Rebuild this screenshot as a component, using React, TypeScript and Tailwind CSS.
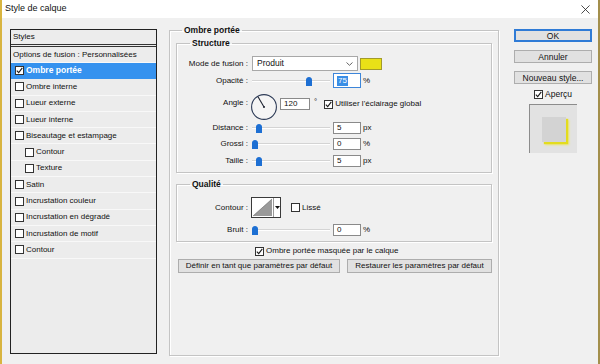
import type { ReactNode } from 'react'

interface Effect {
  label: string
  checked?: boolean
  selected?: boolean
  sub?: boolean
}

const EFFECTS: Effect[] = [
  { label: 'Ombre portée', checked: true, selected: true },
  { label: 'Ombre interne' },
  { label: 'Lueur externe' },
  { label: 'Lueur interne' },
  { label: 'Biseautage et estampage' },
  { label: 'Contour', sub: true },
  { label: 'Texture', sub: true },
  { label: 'Satin' },
  { label: 'Incrustation couleur' },
  { label: 'Incrustation en dégradé' },
  { label: 'Incrustation de motif' },
  { label: 'Contour' },
]

// thumb position is a fraction of the track, not the raw value
const SIZE_SLIDERS = [
  { label: 'Distance', value: '5', unit: 'px', pos: 0.05, gap: 'mt-[1px]' },
  { label: 'Grossi', value: '0', unit: '%', pos: 0, gap: 'mt-[3px]' },
  { label: 'Taille', value: '5', unit: 'px', pos: 0.05, gap: 'mt-[4px]' },
]

function CheckBox({ checked }: { checked?: boolean }) {
  return (
    <span className="flex h-[9px] w-[9px] shrink-0 items-center justify-center border border-[#333] bg-white">
      {checked && (
        <svg viewBox="0 0 7 7" className="h-[7px] w-[7px]">
          <path d="M0.8 3.6 L2.7 5.6 L6.3 0.9" fill="none" stroke="#1a1a1a" strokeWidth="1.1" />
        </svg>
      )}
    </span>
  )
}

function Label({ children }: { children: ReactNode }) {
  return <span className="w-[71px] shrink-0 text-right leading-[10px]">{children} :</span>
}

function NumberBox({ value, className = 'w-[27px]' }: { value: string; className?: string }) {
  return (
    <span className={`flex h-[12px] shrink-0 items-center border border-[#8a8a8a] bg-white pl-[3px] leading-[10px] ${className}`}>
      {value}
    </span>
  )
}

function Slider({ pos }: { pos: number }) {
  return (
    <span className="relative flex h-[10px] w-[78px] shrink-0 items-center">
      <span className="h-[2px] w-full border-b border-white bg-[#d4d4d4]" />
      <svg
        viewBox="0 0 6 9"
        className="absolute top-[1px] h-[9px] w-[6px]"
        style={{ left: `${pos * 72}px` }}
      >
        <path d="M0 3 Q0 0.3 3 0 Q6 0.3 6 3 V9 H0 Z" fill="#1d6fd3" />
      </svg>
    </span>
  )
}

function SliderRow({ label, value, unit, pos, className = '' }: { label: string; value: string; unit: string; pos: number; className?: string }) {
  return (
    <div className={`flex h-[13px] items-center ${className}`}>
      <Label>{label}</Label>
      <span className="ml-[4px] flex items-center">
        <Slider pos={pos} />
        <NumberBox value={value} className="ml-[3px] w-[28px]" />
        <span className="ml-[2px] leading-[10px]">{unit}</span>
      </span>
    </div>
  )
}

function Group({
  title,
  className,
  legendClass = 'ml-[13px]',
  children,
}: {
  title: string
  className: string
  legendClass?: string
  children: ReactNode
}) {
  return (
    <fieldset className={`border border-[#c4c4c4] shadow-[inset_1px_1px_0_#fff,1px_1px_0_#fff] ${className}`}>
      <legend className={`px-[2px] text-[8.5px] leading-[10px] font-bold ${legendClass}`}>{title}</legend>
      {children}
    </fieldset>
  )
}

function Button({ children, primary, className = '' }: { children: ReactNode; primary?: boolean; className?: string }) {
  return (
    <div
      className={`flex h-[13px] items-center justify-center bg-[#e1e1e1] leading-[10px] ${
        primary ? 'border border-[#2f7bd6] shadow-[inset_0_0_0_1px_#2f7bd6]' : 'border border-[#adadad]'
      } ${className}`}
    >
      {children}
    </div>
  )
}

function LeftPanel() {
  return (
    <div className="ml-[8px] mt-[11px] flex h-[325px] w-[147px] flex-col border border-[#222] bg-[#ececec]">
      <div className="flex h-[17px] items-center border-b-[3px] border-double border-[#333] pl-[2px]">Styles</div>
      <div className="flex h-[16px] items-center border-b border-[#f8f8f8] pl-[2px]">
        Options de fusion : Personnalisées
      </div>
      {EFFECTS.map((effect, i) => (
        <div
          key={i}
          className={`flex h-[16.3px] items-center gap-[2px] border-b ${effect.sub ? 'pl-[14px]' : 'pl-[4px]'} ${
            effect.selected ? 'border-[#3592ef] bg-[#3592ef] font-bold text-white' : 'border-[#f8f8f8]'
          }`}
        >
          <CheckBox checked={effect.checked} />
          <span className={effect.selected ? 'text-[8.5px]' : ''}>{effect.label}</span>
        </div>
      ))}
    </div>
  )
}

function DropShadowPanel() {
  return (
    <Group title="Ombre portée" legendClass="ml-[6px]" className="ml-[12px] mt-[7px] h-[331px] w-[330px] px-[6px]">
      <Group title="Structure" className="mt-[3px] h-[135px]">
        <div className="mt-[8px] flex h-[15px] items-center">
          <Label>Mode de fusion</Label>
          <span className="ml-[4px] flex h-[15px] w-[106px] items-center justify-between border border-[#a8a8a8] bg-white pl-[4px] pr-[4px]">
            <span className="text-[8.5px]">Produit</span>
            <svg viewBox="0 0 7 4" className="h-[4px] w-[7px]">
              <path d="M0.5 0.5 L3.5 3.3 L6.5 0.5" fill="none" stroke="#555" strokeWidth="0.9" />
            </svg>
          </span>
          <span className="ml-[2px] h-[12px] w-[22px] border border-[#a39b2a] bg-[#e9e117]" />
        </div>

        <div className="mt-[2px] flex h-[15px] items-center">
          <Label>Opacité</Label>
          <span className="ml-[4px] flex items-center">
            <Slider pos={0.75} />
            <span className="ml-[3px] flex h-[15px] w-[28px] items-center border border-[#3d86da] bg-white pl-[3px]">
              <span className="bg-[#3a8ee6] px-[1px] leading-[10px] text-white">75</span>
            </span>
            <span className="ml-[2px] leading-[10px]">%</span>
          </span>
        </div>

        <div className="mt-[4px] flex h-[28px] items-start">
          <span className="mt-[6px] flex">
            <Label>Angle</Label>
          </span>
          <svg viewBox="0 0 26 26" className="ml-[3px] mt-[2px] h-[26px] w-[26px]">
            <circle cx="13" cy="13" r="12.4" fill="#f5f5f5" stroke="#2c3a56" strokeWidth="1.1" />
            <line x1="13" y1="13" x2="7" y2="2.8" stroke="#1c2230" strokeWidth="1.1" />
            <circle cx="13" cy="13" r="1" fill="#1c2230" />
          </svg>
          <NumberBox value="120" className="ml-[3px] mt-[6px] w-[30px]" />
          <span className="ml-[4px] mt-[5px] leading-[10px]">°</span>
          <span className="ml-[7px] mt-[7px] flex items-center gap-[2px] leading-[10px]">
            <CheckBox checked />
            Utiliser l'éclairage global
          </span>
        </div>

        {SIZE_SLIDERS.map(s => (
          <SliderRow key={s.label} label={s.label} value={s.value} unit={s.unit} pos={s.pos} className={s.gap} />
        ))}
      </Group>

      <Group title="Qualité" className="mt-[6px] h-[63px]">
        <div className="mt-[8px] flex h-[21px] items-center">
          <Label>Contour</Label>
          <span className="ml-[3px] flex h-[21px] w-[30px] border border-[#3a3a3a] bg-white">
            <svg viewBox="0 0 21 19" preserveAspectRatio="none" className="h-full w-[21px]">
              <path d="M1 18 L20 1 V18 Z" fill="#9a9a9a" />
              <path d="M1 18 L20 1" stroke="#6a6a6a" strokeWidth="0.6" />
            </svg>
            <span className="flex flex-1 items-center justify-center border-l border-[#9a9a9a]">
              <svg viewBox="0 0 5 3" className="h-[3px] w-[5px]">
                <path d="M0 0 H5 L2.5 3 Z" fill="#111" />
              </svg>
            </span>
          </span>
          <span className="ml-[10px] flex items-center gap-[2px] leading-[10px]">
            <CheckBox />
            Lissé
          </span>
        </div>
        <SliderRow label="Bruit" value="0" unit="%" pos={0} className="mt-[5px]" />
      </Group>

      <div className="ml-[79px] mt-[4px] flex h-[10px] items-center gap-[2px] leading-[10px]">
        <CheckBox checked />
        Ombre portée masquée par le calque
      </div>

      <div className="mt-[3px] flex h-[14px] gap-[7px] pl-[2px]">
        <Button className="h-[14px] w-[162px]">Définir en tant que paramètres par défaut</Button>
        <Button className="h-[14px] w-[145px]">Restaurer les paramètres par défaut</Button>
      </div>
    </Group>
  )
}

function ActionColumn() {
  return (
    <div className="ml-[15px] mt-[11px] flex w-[78px] flex-col gap-[8px] text-[8.5px]">
      <Button primary>OK</Button>
      <Button>Annuler</Button>
      <Button>Nouveau style...</Button>
      <div className="-mt-[3px] flex h-[10px] items-center justify-center gap-[2px] leading-[10px]">
        <CheckBox checked />
        Aperçu
      </div>
      <div className="-mt-[3px] flex h-[49px] w-[48px] items-center justify-center self-center border-l border-t border-[#8c8c8c] bg-[#e2e2e2]">
        <span className="h-[25px] w-[24px] bg-[#d3d3d3] shadow-[2px_2px_1px_#e3dc1e,3px_3px_2px_#ece66a]" />
      </div>
    </div>
  )
}

export default function App() {
  return (
    <div className="flex h-[364px] w-[600px] flex-col overflow-hidden border-x-2 border-l-[#d8b440] border-r-[#a38f4c] bg-[#f0f0f0] font-['Liberation_Sans',Arial,sans-serif] text-[8px] text-[#111]">
      <div className="flex h-[18px] shrink-0 items-center justify-between bg-white pl-[3px] pr-[8px] text-[9px]">
        <span>Style de calque</span>
        <svg viewBox="0 0 10 10" className="h-[9px] w-[9px]">
          <path d="M0.5 0.5 L9.5 9.5 M9.5 0.5 L0.5 9.5" stroke="#222" strokeWidth="0.9" />
        </svg>
      </div>
      <div className="flex flex-1">
        <LeftPanel />
        <DropShadowPanel />
        <ActionColumn />
      </div>
    </div>
  )
}
